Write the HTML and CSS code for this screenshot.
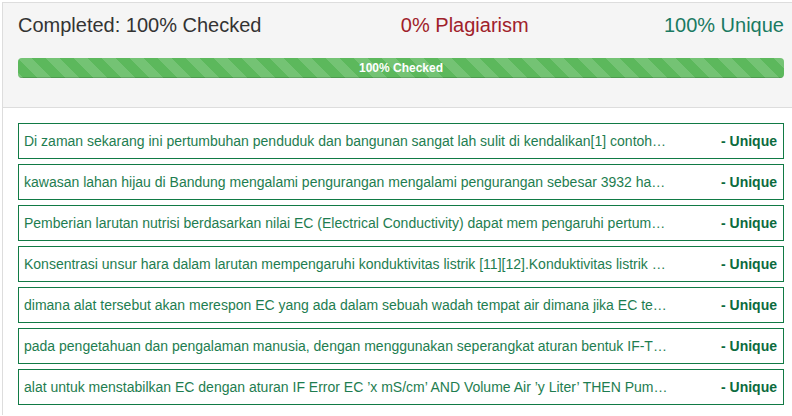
FILE: index.html
```html
<!DOCTYPE html>
<html>
<head>
<meta charset="utf-8">
<link rel="stylesheet" href="styles.css">
</head>
<body>
<div class="panel">
  <div class="panel-heading">
    <div class="stats">
      <div class="stat stat-done">Completed: 100% Checked</div>
      <div class="stat stat-plag">0% Plagiarism</div>
      <div class="stat stat-unique">100% Unique</div>
    </div>
    <div class="progress">
      <div class="progress-bar">100% Checked</div>
    </div>
  </div>
  <div class="panel-body">
    <div class="row"><span class="sentence">Di zaman sekarang ini pertumbuhan penduduk dan bangunan sangat lah sulit di kendalikan[1] contoh kawasan lahan hijau di Bandung mengalami pengurangan</span><span class="verdict">- Unique</span></div>
    <div class="row"><span class="sentence">kawasan lahan hijau di Bandung mengalami pengurangan mengalami pengurangan sebesar 3932 ha dalam kurun waktu beberapa tahun</span><span class="verdict">- Unique</span></div>
    <div class="row"><span class="sentence">Pemberian larutan nutrisi berdasarkan nilai EC (Electrical Conductivity) dapat mem pengaruhi pertumbuhan tanaman</span><span class="verdict">- Unique</span></div>
    <div class="row"><span class="sentence">Konsentrasi unsur hara dalam larutan mempengaruhi konduktivitas listrik [11][12].Konduktivitas listrik larutan nutrisi</span><span class="verdict">- Unique</span></div>
    <div class="row"><span class="sentence">dimana alat tersebut akan merespon EC yang ada dalam sebuah wadah tempat air dimana jika EC tersebut kurang dari</span><span class="verdict">- Unique</span></div>
    <div class="row"><span class="sentence">pada pengetahuan dan pengalaman manusia, dengan menggunakan seperangkat aturan bentuk IF-THEN untuk</span><span class="verdict">- Unique</span></div>
    <div class="row"><span class="sentence">alat untuk menstabilkan EC dengan aturan IF Error EC ’x mS/cm’ AND Volume Air ’y Liter’ THEN Pump Nutrisi</span><span class="verdict">- Unique</span></div>
  </div>
</div>
</body>
</html>
```
FILE: styles.css
```css
html, body {
  margin: 0;
  padding: 0;
  background: #fff;
  overflow: hidden;
}
body {
  font-family: "Liberation Sans", Arial, sans-serif;
  color: #333;
}
.panel {
  margin: 2px 0 0 2px;
  width: 798px;
  border: 1px solid #ddd;
  border-right: none;
  border-bottom: none;
  box-sizing: border-box;
}
.panel-heading {
  background: #f5f5f5;
  border-bottom: 1px solid #ddd;
  padding: 11px 15px 29px 15px;
}
.stats {
  display: grid;
  grid-template-columns: 1fr 1fr 1fr;
  width: 766px;
  font-size: 20px;
  line-height: 23px;
}
.stat-done { text-align: left; color: #333; }
.stat-plag { text-align: right; color: #a0212a; }
.stat-unique { text-align: right; color: #1a7a62; }
.progress {
  margin-top: 21px;
  width: 766px;
  height: 20px;
  border-radius: 4px;
  overflow: hidden;
  background: #f5f5f5;
}
.progress-bar {
  height: 100%;
  background-color: #5cb85c;
  background-image: linear-gradient(45deg, rgba(255,255,255,.15) 25%, transparent 25%, transparent 50%, rgba(255,255,255,.15) 50%, rgba(255,255,255,.15) 75%, transparent 75%, transparent);
  background-size: 28px 28px;
  color: #fff;
  font-size: 12px;
  font-weight: bold;
  line-height: 20px;
  text-align: center;
  box-shadow: inset 0 -1px 0 rgba(0,0,0,.15);
}
.panel-body {
  padding: 15px 15px 10px 15px;
  display: flex;
  flex-direction: column;
  gap: 5px;
}
.row {
  width: 766px;
  box-sizing: border-box;
  height: 36px;
  border: 1px solid #117a45;
  padding: 0 6px 0 5px;
  display: flex;
  align-items: center;
  font-size: 14px;
  color: #1e7d50;
}
.sentence {
  flex: 0 0 85.5%;
  white-space: nowrap;
  overflow: hidden;
  text-overflow: ellipsis;
}
.verdict {
  margin-left: auto;
  font-weight: bold;
  color: #0c6b3e;
}
```
